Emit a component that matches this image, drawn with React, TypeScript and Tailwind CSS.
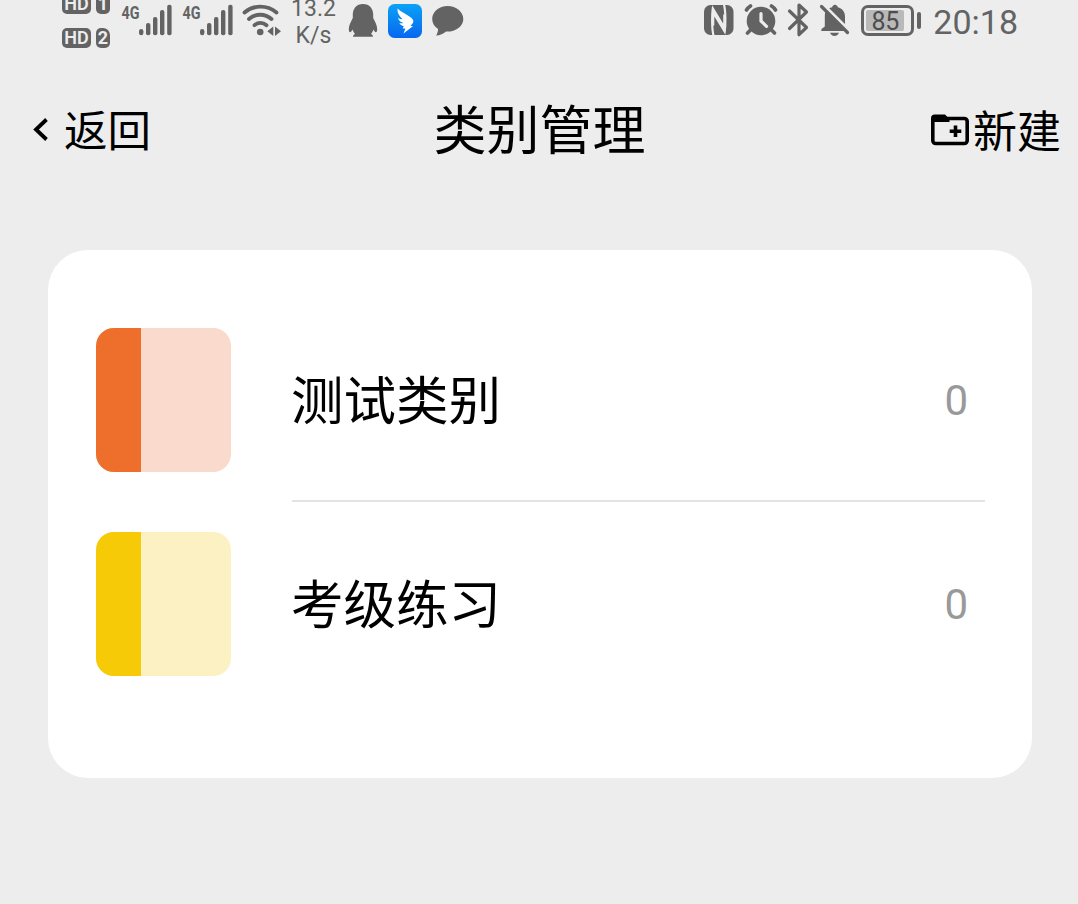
import type { ReactNode } from "react";

type Category = {
  name: string;
  count: number;
  spine: string;
  cover: string;
};

const categories: Category[] = [
  { name: "测试类别", count: 0, spine: "bg-[#ee6f2b]", cover: "bg-[#f9dacc]" },
  { name: "考级练习", count: 0, spine: "bg-[#f6ca07]", cover: "bg-[#fcf1c3]" },
];

function Badge({ children, className }: { children: ReactNode; className: string }) {
  return (
    <span
      className={`flex h-[20px] items-center justify-center rounded-[5px] bg-[#636363] leading-none text-[#ededed] ${className}`}
    >
      {children}
    </span>
  );
}

function HdRow({ sim }: { sim: number }) {
  return (
    <div className="flex gap-[5px]">
      <Badge className="w-[29px] text-[18px] font-semibold">HD</Badge>
      <Badge className="w-[14px] rounded-tr-[7px] text-[18px] font-bold">{sim}</Badge>
    </div>
  );
}

function Signal({ className }: { className: string }) {
  return (
    <svg viewBox="0 0 52 48" className={`h-12 w-[52px] shrink-0 ${className}`} fill="#636363">
      <text x="0.5" y="18.5" fontSize="19" fontWeight="700" fontFamily="Roboto, sans-serif" textLength="18" lengthAdjust="spacingAndGlyphs">
        4G
      </text>
      <rect x="18" y="29" width="4.4" height="6.3" rx="2.2" />
      <rect x="25" y="23" width="4.4" height="12.3" rx="2" />
      <rect x="32" y="17" width="4.4" height="18.3" rx="2" />
      <rect x="39" y="10" width="4.4" height="25.3" rx="2" />
      <rect x="46.2" y="4.7" width="4.4" height="30.6" rx="2" />
    </svg>
  );
}

function WifiIcon() {
  return (
    <svg viewBox="0 0 40 48" className="ml-[8px] h-12 w-10 shrink-0" fill="#636363">
      <g fill="none" stroke="#636363" strokeWidth="3.8" strokeLinecap="round">
        <path d="M2.500 12.500C11.500 4.700 25 4.700 34.500 12.500" />
        <path d="M7 19C13.500 13.300 23 13.300 29.500 19" />
        <path d="M12.500 25.200C15.800 22.200 21 22.200 24.500 25.200" />
      </g>
      <circle cx="18.200" cy="32" r="3.300" />
      <path d="M31.300 26.500v9.500l-6-4.700zM33 26.500v9.500l6-4.700z" />
    </svg>
  );
}

function PenguinIcon() {
  return (
    <svg viewBox="0 0 30 48" className="ml-[12px] h-12 w-[30px] shrink-0" fill="#636363">
      <path d="M15 4C8.500 4 4.800 8.800 4.800 14.500V18C3 21.500.8 25.500.8 29c0 2 .5 3.200 1.200 3.200 1 0 2-1.500 2.500-2.700.6 1.700 1.500 3.200 2.500 4.500C5.500 34.700 5 35.700 5 36.800h20c0-1.100-.5-2.100-2-2.800 1-1.300 1.900-2.800 2.500-4.500.5 1.200 1.500 2.700 2.500 2.700.7 0 1.200-1.200 1.200-3.200 0-3.500-2.200-7.500-4-11v-3.500C25.200 8.800 21.500 4 15 4z" />
    </svg>
  );
}

function WingIcon() {
  return (
    <svg viewBox="0 0 34 48" className="ml-[10px] h-12 w-[34px] shrink-0">
      <defs>
        <linearGradient id="wing-bg" x1="0" y1="0" x2="0" y2="1">
          <stop offset="0" stopColor="#0aa2f6" />
          <stop offset="1" stopColor="#0767ef" />
        </linearGradient>
      </defs>
      <rect y="4" width="34" height="34" rx="6.500" fill="url(#wing-bg)" />
      <path
        d="M9.500 8.500c3.500 3.500 9 5.500 13.700 9.200 2 1.600 2.700 3.400 1.700 5.300L22.500 26h2.600L15.500 33.500l1.900-5h-2.700l1.100-2.500c-2-.3-3.600-1.300-4.400-3.100 1.600.5 3 .4 4.200.1-3-.8-5-2.500-5.600-5 1.700.8 3.600 1.300 5.500 1.200C11.500 16.600 9.300 13.500 9.500 8.500z"
        fill="#fff"
      />
      <path d="M11 14l5 4.500v7l3 1z" fill="#fff" />
    </svg>
  );
}

function ChatIcon() {
  return (
    <svg viewBox="0 0 32 48" className="ml-[10px] h-12 w-8 shrink-0" fill="#636363">
      <path d="M15.600 6C7 6 .2 11.700.2 19c0 4.300 2.200 7.700 5.900 10-.1 2.600-.8 4.700-2.100 6.600 4 0 7.700-1.800 10-4 9.400.4 17.300-5 17.300-12.600C31.300 11.700 24.200 6 15.600 6z" />
    </svg>
  );
}

function NfcIcon() {
  return (
    <svg viewBox="0 0 30 48" className="h-12 w-[30px] shrink-0">
      <rect y="5" width="29.500" height="30" rx="6.500" fill="#636363" />
      <path d="M9.500 35.500C7.800 29 7.800 15 8.800 8.500l11.500 19V14.500" fill="none" stroke="#ededed" strokeWidth="2.200" />
      <path d="M20 4.500c1.700 6.500 1.700 20.500.7 27L9.200 12.500V25.500" fill="none" stroke="#ededed" strokeWidth="2.200" />
    </svg>
  );
}

function AlarmIcon() {
  return (
    <svg viewBox="0 0 34 48" className="ml-[10px] h-12 w-[34px] shrink-0">
      <circle cx="17" cy="21" r="14.300" fill="#636363" />
      <g fill="none" stroke="#636363" strokeWidth="3.600" strokeLinecap="round">
        <path d="M2.500 10c1-1.700 2.400-3 4-4M31.500 10c-1-1.700-2.400-3-4-4M6.500 30l-3 3M27.500 30l3 3" />
      </g>
      <path d="M17 13.500V21l5.500 5.300" fill="none" stroke="#ededed" strokeWidth="3.200" strokeLinecap="round" />
    </svg>
  );
}

function BluetoothIcon() {
  return (
    <svg viewBox="0 0 22 48" className="ml-[9px] h-12 w-[22px] shrink-0" fill="none" stroke="#636363" strokeWidth="3.200" strokeLinecap="round" strokeLinejoin="round">
      <path d="M2.500 11l17 16.500-7.500 7.200V5l7.500 7-17 16.500" />
    </svg>
  );
}

function BellOffIcon() {
  return (
    <svg viewBox="0 0 32 48" className="ml-[10px] h-12 w-8 shrink-0" fill="#636363">
      <path d="M9.500 8.700c1.200-.9 2.500-1.300 3.700-1.500C13.400 5.700 14.600 4.800 16 4.800s2.600.9 2.800 2.400c4.300 1 7.200 4.500 7.200 9V25z" />
      <path d="M6.500 11L26 31H2.500c-.8-1.200 0-2.500 3.300-4.500V16c0-1.300.2-2.500.7-5z" />
      <path d="M11 32.800h9c-.7 2-2.300 3.200-4.500 3.200S11.700 34.800 11 32.800z" />
      <path d="M4.500 4L31 30.500" stroke="#ededed" strokeWidth="2" />
      <path d="M2.500 6.500L28.500 32.500" stroke="#636363" strokeWidth="3.200" strokeLinecap="round" />
    </svg>
  );
}

function Battery({ level }: { level: number }) {
  return (
    <div className="ml-[10px] mt-[5px] flex h-[31px] items-center gap-[3px]">
      <div className="flex h-[31px] w-[53px] items-center rounded-[7px] border-[3px] border-[#636363] pl-[2px]">
        <div className="flex h-[21px] w-[38px] items-center justify-center rounded-[2px] bg-[#b9b9b9]">
          <span className="mt-[1px] text-[25px] leading-none tracking-[-0.3px] text-[#4d4d4d]">{level}</span>
        </div>
      </div>
      <div className="h-[17px] w-[4px] rounded-[2px] bg-[#636363]" />
    </div>
  );
}

function StatusBar() {
  return (
    <div className="flex h-14 items-start justify-between overflow-hidden pl-[62px] pr-[60px] font-[Roboto,sans-serif] text-[#636363]">
      <div className="flex items-start">
        <div className="-mt-[6px] flex flex-col gap-[14px]">
          <HdRow sim={1} />
          <HdRow sim={2} />
        </div>
        <Signal className="ml-[11px]" />
        <Signal className="ml-[9px]" />
        <WifiIcon />
        <div className="-mt-[5px] ml-[9px] w-[45px] text-center text-[23px] leading-[27px]">
          <div>13.2</div>
          <div>K/s</div>
        </div>
        <PenguinIcon />
        <WingIcon />
        <ChatIcon />
      </div>
      <div className="flex items-start">
        <NfcIcon />
        <AlarmIcon />
        <BluetoothIcon />
        <BellOffIcon />
        <Battery level={85} />
        <span className="ml-[12px] mt-[1px] text-[34px] leading-[42px]">20:18</span>
      </div>
    </div>
  );
}

function NavBar() {
  return (
    <header className="grid h-[148px] grid-cols-[1fr_auto_1fr] items-center pl-[33px] pr-[17px]">
      <button className="flex items-center text-[43.5px] leading-[60px]">
        <svg viewBox="0 0 16 24" className="h-6 w-4" fill="none" stroke="#000" strokeWidth="3.800">
          <path d="M13.500 1.500L3 11.500l10.500 10" />
        </svg>
        <span className="-mt-[3px] ml-[15px]">返回</span>
      </button>
      <h1 className="-ml-[15px] -mt-[6px] text-[53px] leading-[72px]">类别管理</h1>
      <button className="flex items-center justify-self-end text-[44px] leading-[60px]">
        <svg viewBox="0 0 38 32" className="h-8 w-[38px]">
          <rect x="1.800" y="4.500" width="34.400" height="25" rx="3" fill="none" stroke="#000" strokeWidth="3.600" />
          <path d="M0 9V4c0-2.200 1.500-3.500 3.500-3.500H14L18.500 5v3H0z" />
          <path d="M24.500 11.500v11.500M18.700 17.300h11.600" stroke="#000" strokeWidth="3.600" />
        </svg>
        <span className="-mt-[2px] ml-[4px]">新建</span>
      </button>
    </header>
  );
}

function CategoryRow({ category, last }: { category: Category; last: boolean }) {
  return (
    <li className="flex h-[204px] items-stretch gap-[61px]">
      <div className={`mt-[30px] h-36 w-[135px] shrink-0 overflow-hidden rounded-[18px] ${category.cover}`}>
        <div className={`h-full w-[45px] ${category.spine}`} />
      </div>
      <div
        className={`flex flex-1 items-center justify-between border-b-2 pr-[17px] ${
          last ? "border-transparent" : "border-[#e3e3e3]"
        }`}
      >
        <span className="-ml-[1px] -mt-[4px] text-[52.5px] leading-[72px]">{category.name}</span>
        <span className="mt-[3px] font-[Roboto,sans-serif] text-[42px] leading-[60px] text-[#999]">{category.count}</span>
      </div>
    </li>
  );
}

export default function App() {
  return (
    <div className="h-[904px] w-[1078px] overflow-hidden bg-[#ededed] font-['Noto_Sans_CJK_SC',sans-serif] text-black">
      <StatusBar />
      <NavBar />
      <main className="ml-12 mt-[46px] h-[528px] w-[984px] rounded-[40px] bg-white pl-12 pr-[47px] pt-12">
        <ul>
          {categories.map((category, i) => (
            <CategoryRow key={category.name} category={category} last={i === categories.length - 1} />
          ))}
        </ul>
      </main>
    </div>
  );
}
